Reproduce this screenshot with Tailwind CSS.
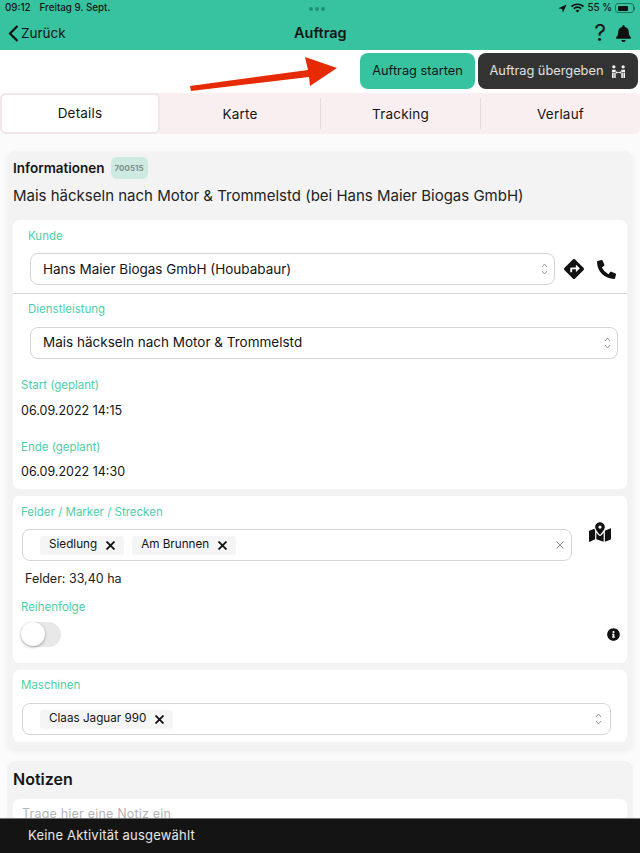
<!DOCTYPE html>
<html lang="de">
<head>
    <meta charset="UTF-8">
    <meta name="viewport" content="width=device-width, initial-scale=1.0">
    <title>Auftrag</title>
    <script src="https://cdn.jsdelivr.net/npm/@tailwindcss/browser@4"></script>
</head>
<body class="bg-[#fbfbfb] font-[Inter,sans-serif] text-[#151515]">
<div class="relative w-[640px] h-[853px] overflow-hidden">

    <!-- Header -->
    <header class="bg-[#37c3a0] h-[50px] px-2">
        <div class="relative flex items-center justify-between h-[16px] -mx-[3px] text-[9.800px] font-medium">
            <div class="flex gap-[9px]"><span>09:12</span><span>Freitag 9. Sept.</span></div>
            <div class="absolute left-[304px] top-[7px] flex gap-[2px]">
                <span class="w-[4px] h-[4px] rounded-full bg-[#1f8f75]"></span>
                <span class="w-[4px] h-[4px] rounded-full bg-[#1f8f75]"></span>
                <span class="w-[4px] h-[4px] rounded-full bg-[#1f8f75]"></span>
            </div>
            <div class="flex items-center gap-[3px]">
                <svg class="w-[9px] h-[9px]" viewBox="0 0 24 24"><path d="M23 1 1 11l10 2 2 10z" fill="#111"/></svg>
                <svg class="w-[15px] h-[10px]" viewBox="0 0 28 20" fill="none" stroke="#111" stroke-width="3.4"><path d="M2 7c7-6 17-6 24 0M6.500 11.500c4.500-4 10.500-4 15 0"/><path d="M14 19l-4-4.200c2.400-1.800 5.600-1.800 8 0z" fill="#111" stroke="none"/></svg>
                <span>55 %</span>
                <span class="flex items-center">
                    <span class="flex w-[19px] h-[10px] p-[1.500px] rounded-[3px] border border-[#17755f]"><span class="w-[10px] bg-[#111] rounded-[1px]"></span></span>
                    <span class="w-[1px] h-[3px] bg-[#17755f]"></span>
                </span>
            </div>
        </div>
        <div class="relative flex items-center justify-between h-[34px]">
            <div class="flex items-center gap-[2px]">
                <svg class="w-[11px] h-[17px]" viewBox="0 0 11 17" fill="none" stroke="#111" stroke-width="2.200"><path d="M9.500 1 2 8.500 9.500 16"/></svg>
                <span class="text-[13.500px]">Zurück</span>
            </div>
            <span class="absolute left-[286px] text-[14.500px] font-semibold">Auftrag</span>
            <div class="flex items-center gap-[10px] pr-[1px]">
                <span class="text-[23px] leading-none">?</span>
                <svg class="w-[15px] h-[17px]" viewBox="0 0 448 512"><path fill="#111" d="M224 512c35.320 0 63.970-28.650 63.970-64H160.030c0 35.350 28.650 64 63.970 64zm215.390-149.710c-19.320-20.760-55.470-51.990-55.470-154.290 0-77.700-54.480-139.900-127.940-155.160V32c0-17.670-14.320-32-31.980-32s-31.980 14.330-31.980 32v20.840C118.560 68.100 64.080 130.300 64.080 208c0 102.300-36.150 133.530-55.470 154.290-6 6.450-8.660 14.160-8.610 21.710.11 16.400 12.980 32 32.100 32h383.800c19.120 0 32-15.600 32.100-32 .05-7.550-2.610-15.270-8.610-21.710z"/></svg>
            </div>
        </div>
    </header>

    <!-- Actions -->
    <div class="relative flex justify-end items-start gap-[3px] h-[43px] pt-[3px] pr-[2px] bg-white">
        <svg class="absolute left-[188px] top-[6px] w-[152px] h-[36px]" viewBox="0 0 152 36"><path d="M2 30 120 14 117 1l32 11-27 18-1-9L3 35z" fill="#e62a04"/></svg>
        <button class="w-[115px] h-[36px] rounded-[8px] bg-[#37c3a0] text-[12.800px]">Auftrag starten</button>
        <button class="flex items-center justify-center gap-[8px] w-[160px] h-[36px] rounded-[8px] bg-[#333] text-white/85 text-[12.800px]">
            Auftrag übergeben
            <svg class="w-[15px] h-[13px]" viewBox="0 0 16 14" fill="#f2f2f2"><circle cx="3" cy="2" r="1.800"/><circle cx="13" cy="2" r="1.800"/><path d="M1 5h4v2.500H1zM11 5h4v2.500h-4zM1 8h1.800v6H1zM3.400 8H5v6H3.400zM11 8h1.700v6H11zM13.300 8H15v6h-1.700z"/><path d="M5.500 7.500h5v1h-5z"/><path d="m6.500 6.300-1.500 1.700 1.500 1.700zM9.500 6.300l1.500 1.700-1.500 1.700z"/></svg>
        </button>
    </div>

    <!-- Tabs -->
    <nav class="flex h-[41px] rounded-[6px] bg-[#f9eff0] text-[13.500px] tracking-[0.2px]">
        <div class="flex items-center justify-center w-[160px] rounded-[6px] bg-white border-2 border-[#f1e6e8]">Details</div>
        <div class="flex items-center justify-center w-[161px] pt-[1px] border-r border-[#e5dcdd] my-[5px]">Karte</div>
        <div class="flex items-center justify-center w-[160px] pt-[1px] border-r border-[#e5dcdd] my-[5px]">Tracking</div>
        <div class="flex items-center justify-center w-[159px] pt-[1px] my-[5px]">Verlauf</div>
    </nav>

    <main class="px-[7px] pt-[17px]">
        <!-- Informationen -->
        <section class="rounded-[8px] bg-[#f3f3f3] px-[6px] pt-[6px] pb-[7px] shadow-[0_2px_6px_rgba(0,0,0,0.06)]">
            <div class="flex items-center gap-[6px] h-[22px]">
                <span class="pt-[1px] text-[13.500px] font-semibold">Informationen</span>
                <span class="flex items-center h-[22px] px-[4px] rounded-[6px] bg-[#cdeae2] text-[8px] font-bold text-[#7f8f8b]">700515</span>
            </div>
            <h2 class="mt-[3px] mb-[2px] h-[36px] text-[15px] leading-[28px] text-[#222]">Mais häckseln nach Motor &amp; Trommelstd (bei Hans Maier Biogas GmbH)</h2>

            <div class="flex flex-col gap-[7px]">
                <div class="rounded-[6px] bg-white h-[269px]">
                    <div class="h-[74px] border-b border-[#d8d8d8] pl-[17px] pr-[11px]">
                        <p class="pt-[8px] -ml-[2px] text-[11.500px] leading-[16px] text-[#4ccfa9]">Kunde</p>
                        <div class="flex items-center mt-[9px]">
                            <div class="flex items-center justify-between w-[525px] h-[32px] pl-[12px] pr-[6px] rounded-[8px] border border-[#d5d5d5] text-[13.500px]">
                                Hans Maier Biogas GmbH (Houbabaur)
                                <svg class="w-[7px] h-[12px]" viewBox="0 0 7 12" fill="none" stroke="#999"><path d="m1 4 2.500-3L6 4M1 8l2.500 3L6 8"/></svg>
                            </div>
                            <svg class="w-[20px] h-[20px] ml-[9px]" viewBox="0 0 512 512"><path fill="#111" d="M502.610 233.320 278.680 9.390c-12.520-12.520-32.830-12.520-45.360 0L9.390 233.320c-12.520 12.530-12.520 32.830 0 45.360l223.930 223.930c12.520 12.530 32.830 12.530 45.360 0l223.930-223.930c12.520-12.530 12.520-32.830 0-45.360zm-100.980 12.560-84.210 77.730c-5.120 4.730-13.430 1.100-13.430-5.880V264h-96v64c0 4.420-3.580 8-8 8h-32c-4.420 0-8-3.580-8-8v-80c0-17.670 14.330-32 32-32h112v-53.730c0-6.970 8.300-10.610 13.430-5.880l84.210 77.730c3.430 3.170 3.430 8.590 0 11.760z"/></svg>
                            <svg class="w-[19px] h-[19px] ml-[13px]" viewBox="0 0 512 512"><path fill="#111" d="M497.390 361.800l-112-48a24 24 0 0 0-28 6.900l-49.600 60.600A370.660 370.660 0 0 1 130.600 204.110l60.600-49.600a23.940 23.940 0 0 0 6.900-28l-48-112A24.160 24.160 0 0 0 122.600.610l-104 24A24 24 0 0 0 0 48c0 256.500 207.900 464 464 464a24 24 0 0 0 23.400-18.600l24-104a24.290 24.290 0 0 0-14.010-27.600z"/></svg>
                        </div>
                    </div>
                    <div class="pl-[17px] pr-[9px]">
                        <p class="pt-[7px] -ml-[2px] text-[11.500px] leading-[16px] text-[#4ccfa9]">Dienstleistung</p>
                        <div class="flex items-center justify-between mt-[10px] h-[32px] pl-[12px] pr-[6px] pb-[2px] rounded-[8px] border border-[#d5d5d5] text-[13.500px]">
                            Mais häckseln nach Motor &amp; Trommelstd
                            <svg class="w-[7px] h-[12px] mt-[2px]" viewBox="0 0 7 12" fill="none" stroke="#999"><path d="m1 4 2.500-3L6 4M1 8l2.500 3L6 8"/></svg>
                        </div>
                    </div>
                    <div class="pl-[8px]">
                        <p class="mt-[18px] text-[11.500px] leading-[16px] text-[#4ccfa9]">Start (geplant)</p>
                        <p class="mt-[9px] text-[12.500px] leading-[18px]">06.09.2022 14:15</p>
                        <p class="mt-[19px] text-[11.500px] leading-[16px] text-[#4ccfa9]">Ende (geplant)</p>
                        <p class="mt-[8px] text-[12.500px] leading-[18px]">06.09.2022 14:30</p>
                    </div>
                </div>

                <!-- Felder -->
                <div class="rounded-[6px] bg-white h-[167px] pl-[8px]">
                    <p class="pt-[8px] text-[11.500px] leading-[16px] text-[#4ccfa9]">Felder / Marker / Strecken</p>
                    <div class="flex">
                        <div class="flex items-center gap-[8px] w-[550px] h-[32px] mt-[9px] ml-[1px] pl-[17px] pr-[7px] rounded-[8px] border border-[#d5d5d5] text-[11.700px]">
                            <span class="flex items-center gap-[9px] h-[19px] pl-[9px] pr-[9px] rounded-[3px] bg-[#f5f5f5]">Siedlung
                                <svg class="w-[9px] h-[9px]" viewBox="0 0 9 9" stroke="#111" stroke-width="1.800"><path d="m.5.5 8 8M8.500.5l-8 8"/></svg></span>
                            <span class="flex items-center gap-[9px] h-[19px] pl-[9px] pr-[9px] rounded-[3px] bg-[#f5f5f5]">Am Brunnen
                                <svg class="w-[9px] h-[9px]" viewBox="0 0 9 9" stroke="#111" stroke-width="1.800"><path d="m.5.5 8 8M8.500.5l-8 8"/></svg></span>
                            <svg class="w-[8px] h-[8px] ml-auto" viewBox="0 0 8 8" stroke="#999"><path d="m.5.5 7 7M7.500.5l-7 7"/></svg>
                        </div>
                        <svg class="w-[22px] h-[20px] ml-[17px] mt-[2px]" viewBox="0 0 576 512"><path fill="#111" d="M288 0c-69.590 0-126 56.410-126 126 0 56.260 82.350 158.800 113.900 196.020 6.390 7.540 17.820 7.540 24.200 0C331.650 284.800 414 182.260 414 126 414 56.410 357.590 0 288 0zm0 168c-23.200 0-42-18.800-42-42s18.800-42 42-42 42 18.800 42 42-18.800 42-42 42zM20.120 215.950A32.006 32.006 0 0 0 0 245.660v250.320c0 11.320 11.430 19.060 21.940 14.860L160 448V214.920c-8.840-15.980-16.070-31.540-21.250-46.420L20.120 215.950zM288 359.670c-14.070 0-27.380-6.180-36.510-16.960-19.660-23.200-40.570-49.620-59.490-76.720V448l192 64V266c-18.920 27.090-39.820 53.520-59.490 76.720-9.130 10.770-22.440 16.950-36.510 16.950zm266.060-198.510L416 224v288l139.880-55.950A31.996 31.996 0 0 0 576 426.340V176.020c0-11.320-11.430-19.060-21.940-14.860z"/></svg>
                    </div>
                    <p class="mt-[9px] ml-[4px] text-[12.500px] leading-[18px] text-[#222]">Felder: 33,40 ha</p>
                    <p class="mt-[11px] text-[11.500px] leading-[16px] text-[#4ccfa9]">Reihenfolge</p>
                    <div class="flex items-center justify-between mt-[7px] pr-[7px]">
                        <span class="flex w-[40px] h-[25px] rounded-full bg-[#e8e8e8]"><span class="w-[24px] h-[24px] rounded-full bg-white shadow-[0_1px_3px_rgba(0,0,0,0.35)]"></span></span>
                        <svg class="w-[13px] h-[13px]" viewBox="0 0 512 512"><path fill="#111" d="M256 8C119.043 8 8 119.083 8 256c0 136.997 111.043 248 248 248s248-111.003 248-248C504 119.083 392.957 8 256 8zm0 110c23.196 0 42 18.804 42 42s-18.804 42-42 42-42-18.804-42-42 18.804-42 42-42zm56 254c0 6.627-5.373 12-12 12h-88c-6.627 0-12-5.373-12-12v-24c0-6.627 5.373-12 12-12h12v-64h-12c-6.627 0-12-5.373-12-12v-24c0-6.627 5.373-12 12-12h64c6.627 0 12 5.373 12 12v100h12c6.627 0 12 5.373 12 12v24z"/></svg>
                    </div>
                </div>

                <!-- Maschinen -->
                <div class="rounded-[6px] bg-white h-[72px] pl-[8px]">
                    <p class="pt-[7px] text-[11.500px] leading-[16px] text-[#4ccfa9]">Maschinen</p>
                    <div class="flex items-center justify-between w-[589px] h-[32px] mt-[10px] ml-[1px] pl-[17px] pr-[8px] rounded-[8px] border border-[#d5d5d5] text-[11.700px]">
                        <span class="flex items-center gap-[9px] h-[19px] pl-[9px] pr-[9px] rounded-[3px] bg-[#f5f5f5]">Claas Jaguar 990
                            <svg class="w-[9px] h-[9px]" viewBox="0 0 9 9" stroke="#111" stroke-width="1.800"><path d="m.5.5 8 8M8.500.5l-8 8"/></svg></span>
                        <svg class="w-[7px] h-[12px]" viewBox="0 0 7 12" fill="none" stroke="#999"><path d="m1 4 2.500-3L6 4M1 8l2.500 3L6 8"/></svg>
                    </div>
                </div>
            </div>
        </section>

        <!-- Notizen -->
        <section class="mt-[12px] rounded-[8px] bg-[#f3f3f3] px-[6px] pt-[6px] h-[120px]">
            <h3 class="h-[26px] text-[16px] font-semibold leading-[24px]">Notizen</h3>
            <div class="mt-[6px] rounded-[6px] bg-white h-[60px] px-[9px] pt-[6px] text-[12.500px] tracking-[0.2px] text-[#b5b5b5]">Trage hier eine Notiz ein</div>
        </section>
    </main>

    <!-- Aktivitaet bar -->
    <div class="absolute left-0 right-0 bottom-0 flex items-center h-[35px] pl-[28px] border-t border-[#777] bg-[#141414] text-white/90 text-[13px] tracking-[0.2px]">Keine Aktivität ausgewählt</div>
</div>
</body>
</html>
